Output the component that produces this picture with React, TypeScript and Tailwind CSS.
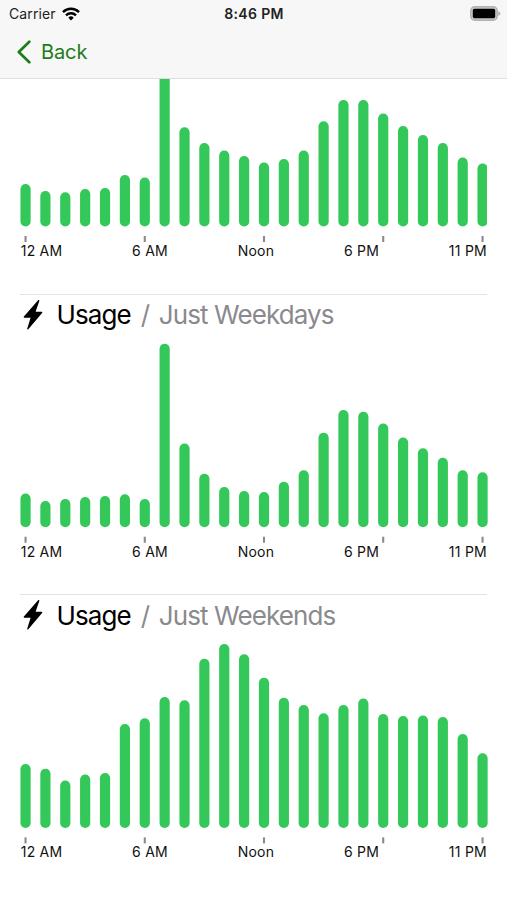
const DAILY = [
    42.7, 35.7, 34.4, 37.7, 38.7, 51.5, 49, 183.6, 99.4, 83.7, 76, 70.7,
    64.2, 67.7, 76, 105.4, 126.7, 126.7, 113.2, 100.7, 91.7, 83.7, 69, 63,
]
const WEEKDAYS = [
    33.8, 26.3, 28.3, 30.3, 31.3, 33, 28.3, 183.6, 83.8, 53.6, 40.3, 36.3,
    35.3, 45.6, 57, 94.6, 117.3, 115.5, 103.8, 89.8, 79, 69.5, 57, 55,
]
const WEEKENDS = [
    64, 59.3, 47.5, 53.5, 55, 104, 109.7, 131, 127.7, 169.3, 184, 173.7,
    150.3, 130.3, 123, 114.7, 123, 129.5, 114, 112, 112.5, 111, 94, 74.7,
]

const LABELS = ['12 AM', '6 AM', 'Noon', '6 PM', '11 PM']
const TICK_HOURS = [0, 6, 12, 18, 23]

const BAR_WIDTH = 10.2
const BAR_PITCH = 19.87

function StatusBar() {
    return (
        <div className="grid grid-cols-3 items-center h-[27px] pl-[9px] pr-[6px] text-[14px] text-[#222]">
            <div className="flex items-center gap-[6px]">
                <span className="tracking-[0.1px]">Carrier</span>
                <svg width="18" height="14" viewBox="0 0 18 14" fill="none" stroke="#000" strokeWidth="2.4">
                    <path d="M1 5.1C5.4 .7 12.6 .7 17 5.1" />
                    <path d="M4 8.3c2.8-2.7 7.2-2.7 10 0" />
                    <path d="M9 13.4 6.3 10.7a3.8 3.8 0 0 1 5.4 0Z" fill="#000" stroke="none" />
                </svg>
            </div>
            <span className="text-center pr-[2px] font-semibold tracking-[0.35px] whitespace-nowrap">8:46 PM</span>
            <svg className="justify-self-end mb-[1px]" width="31" height="15" viewBox="0 0 31 15">
                <rect x=".8" y=".8" width="26.4" height="13.4" rx="4" fill="#c8c8c8" stroke="#b2b2b2" strokeWidth="1.5" />
                <rect x="2.8" y="2.8" width="22.4" height="9.4" rx="1.6" fill="#000" />
                <path d="M28.2 5.2c1.3.4 2.3 1.3 2.3 2.3s-1 1.9-2.3 2.3Z" fill="#b2b2b2" />
            </svg>
        </div>
    )
}

// baseline = distance from the top of the drawing to the foot of the bars
function UsageChart({ values, baseline }: { values: number[]; baseline: number }) {
    const height = Math.floor(baseline + 15.7)

    return (
        <div>
            <svg width="468" height={height} viewBox={`0 0 468 ${height}`} className="block overflow-visible">
                {values.map((v, i) => (
                    <rect
                        key={i}
                        x={0.45 + i * BAR_PITCH}
                        y={baseline - v}
                        width={BAR_WIDTH}
                        height={v}
                        rx={BAR_WIDTH / 2}
                        fill="#34c759"
                    />
                ))}
                {TICK_HOURS.map((hour) => (
                    <rect key={hour} x={4.5 + hour * BAR_PITCH} y={baseline + 9.4} width="2.1" height="6" fill="#8a8a8e" />
                ))}
            </svg>
            <div className="flex justify-between pl-[0.7px] h-[18px] leading-[18px] text-[14px] tracking-[0.25px] text-[#111]">
                {LABELS.map((label) => (
                    <span key={label}>{label}</span>
                ))}
            </div>
        </div>
    )
}

function UsageSection({ title, values, baseline }: { title: string; values: number[]; baseline: number }) {
    return (
        <section className="h-[300.4px] border-t border-[#e3e3e5]">
            <h2 className="flex items-center h-[48px] pb-[8.4px] pl-[3px] text-[26px] tracking-[-0.9px] whitespace-nowrap">
                <svg width="20" height="30" viewBox="0 0 20 30" className="mr-[13.5px]">
                    <path d="M14.9.4 .9 16.5c-.5.6-.2 1.2.5 1.2h6.2L4.3 28.4c-.4 1.1.5 1.5 1.2.7L19.1 13c.5-.6.2-1.2-.5-1.2h-6L16.3 1.1c.4-1.1-.7-1.5-1.4-.7Z" />
                </svg>
                <span>Usage</span>
                <span className="ml-[10px] text-[#8a8a8e]">/</span>
                <span className="ml-[9.5px] text-[#8a8a8e]">{title}</span>
            </h2>
            <UsageChart values={values} baseline={baseline} />
        </section>
    )
}

export default function App() {
    return (
        <div className="w-[507px] h-[900px] overflow-hidden bg-white text-black font-[Inter,sans-serif]">
            <header className="h-[79px] bg-[#f7f7f7] border-b border-[#dfdfdf]">
                <StatusBar />
                <button className="flex items-center h-[50px] pl-[17px] gap-[10px] text-[20px] tracking-[-0.1px] text-[#1c7c1c]">
                    <svg width="14" height="24" viewBox="0 0 14 24" fill="none" stroke="currentColor" strokeWidth="2.7" strokeLinecap="round" strokeLinejoin="round">
                        <path d="M12.3 1.8 1.8 12l10.5 10.2" />
                    </svg>
                    Back
                </button>
            </header>

            <main className="px-5">
                <section className="h-[215px] overflow-hidden">
                    <UsageChart values={DAILY} baseline={147.6} />
                </section>
                <UsageSection title="Just Weekdays" values={WEEKDAYS} baseline={184.3} />
                <UsageSection title="Just Weekends" values={WEEKENDS} baseline={185} />
            </main>
        </div>
    )
}
